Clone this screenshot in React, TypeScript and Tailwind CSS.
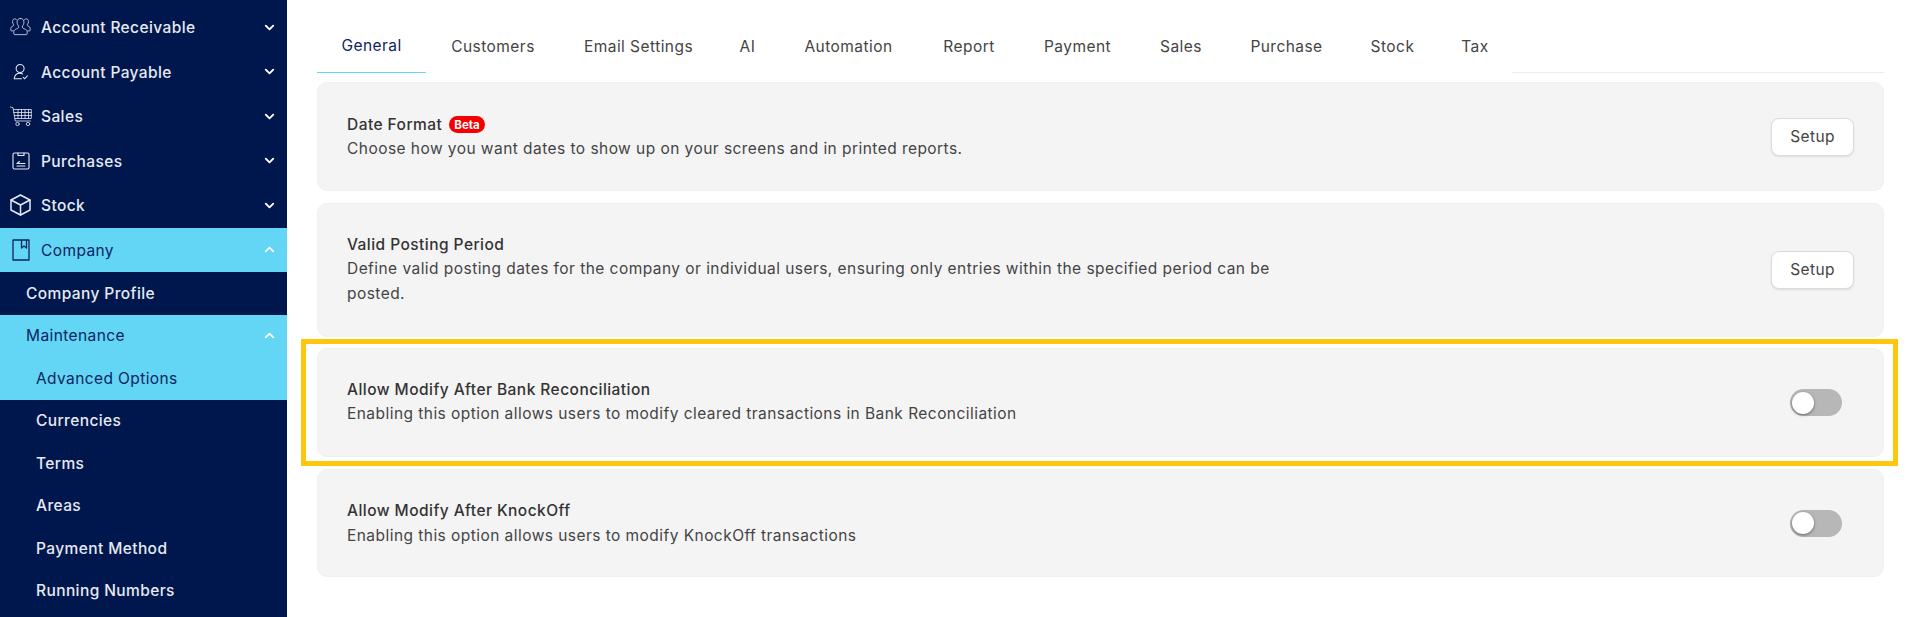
import { ChevronDown, ChevronUp } from "lucide-react";
import type { ReactNode } from "react";

const font = "[font-family:Inter,'Noto_Sans',sans-serif]";

const ReceivableIcon = () => (
  <svg width="21" height="20" viewBox="0 0 22 21" fill="none" stroke="currentColor" strokeWidth="0.8" strokeLinecap="round" strokeLinejoin="round">
    <path d="M11 1.500c-2.300 0-3.600 1.700-3.600 3.900 0 1.700.7 3.100 1.600 4.100v1.300c0 .8-1 1.200-2.400 1.800-1.400.6-2.600 1.200-2.600 2.700v2.200c0 .6.400 1 1 1h12c.6 0 1-.4 1-1v-2.200c0-1.500-1.200-2.100-2.600-2.700-1.400-.6-2.400-1-2.400-1.800V9.500c.9-1 1.600-2.400 1.600-4.100C14.600 3.200 13.300 1.500 11 1.500z" />
    <path d="M7 3C6.500 2.300 5.800 2 5 2 3.400 2 2.600 3.300 2.600 4.800c0 1.200.5 2.200 1.100 2.900v1c0 .6-.7.900-1.500 1.300C1.300 10.500.8 11 .8 12v1.800c0 .5.300.8.800.8h1.600" />
    <path d="M15 3c.5-.7 1.200-1 2-1 1.600 0 2.400 1.300 2.400 2.800 0 1.200-.5 2.200-1.100 2.900v1c0 .6.700.9 1.500 1.300.9.500 1.400 1 1.400 2v1.800c0 .5-.3.800-.8.800h-1.600" />
  </svg>
);

const PayableIcon = () => (
  <svg width="16" height="18" viewBox="0 0 18 20" fill="none" stroke="currentColor" strokeWidth="1.200" strokeLinecap="round" strokeLinejoin="round">
    <circle cx="8" cy="6" r="4.500" />
    <path d="M1.500 17.500c.3-3.600 2.700-6 6.300-6 1.200 0 2.200.2 3 .7" />
    <path d="M1.500 17.500h8" />
    <path d="M11.500 16l1.700 1.600 3-3.200" />
  </svg>
);

const CartIcon = () => (
  <svg width="22" height="21" viewBox="0 0 22 21" fill="none" stroke="currentColor" strokeWidth="0.8" strokeLinecap="round" strokeLinejoin="round">
    <path d="M.5 1l2.500.7 2.300 13.300h15.200" />
    <path d="M3.600 3.500h17.700v9H5" />
    <path d="M3.800 6.500h17.500M4.300 9.500h17M8 3.500v9M11.500 3.500v9M15 3.500v9M18.500 3.500v9" />
    <circle cx="7.500" cy="18" r="1.700" />
    <circle cx="18" cy="18" r="1.700" />
  </svg>
);

const PurchaseIcon = () => (
  <svg width="18" height="18" viewBox="0 0 18 18" fill="none" stroke="currentColor" strokeWidth="1.100" strokeLinecap="round" strokeLinejoin="round">
    <rect x="1" y="1" width="16" height="16" rx="1.500" />
    <path d="M6 1v2.500h6V1" />
    <path d="M5 14h8M5 11.500h8M7.500 9.500L5 11.500" />
  </svg>
);

const BoxIcon = () => (
  <svg width="21" height="22" viewBox="0 0 21 22" fill="none" stroke="currentColor" strokeWidth="1.500" strokeLinecap="round" strokeLinejoin="round">
    <path d="M10.500 1L1 6v10l9.500 5 9.500-5V6z" />
    <path d="M1 6l9.500 5 9.500-5M10.500 11v10" />
  </svg>
);

const BookIcon = () => (
  <svg width="18" height="22" viewBox="0 0 18 22" fill="none" stroke="currentColor" strokeWidth="1.300" strokeLinejoin="round">
    <rect x="1" y="1" width="16" height="20" />
    <path d="M9.500 1v8l2.500-2 2.500 2V1" />
  </svg>
);

const topItems: { label: string; icon: ReactNode }[] = [
  { label: "Account Receivable", icon: <ReceivableIcon /> },
  { label: "Account Payable", icon: <PayableIcon /> },
  { label: "Sales", icon: <CartIcon /> },
  { label: "Purchases", icon: <PurchaseIcon /> },
  { label: "Stock", icon: <BoxIcon /> },
];

const subItems = ["Currencies", "Terms", "Areas", "Payment Method", "Running Numbers"];

const tabs = [
  { label: "General", width: "w-[109px]" },
  { label: "Customers", width: "w-[134px]" },
  { label: "Email Settings", width: "w-[157px]" },
  { label: "AI", width: "w-[61px]" },
  { label: "Automation", width: "w-[141px]" },
  { label: "Report", width: "w-[100px]" },
  { label: "Payment", width: "w-[117px]" },
  { label: "Sales", width: "w-[90px]" },
  { label: "Purchase", width: "w-[121px]" },
  { label: "Stock", width: "w-[91px]" },
  { label: "Tax", width: "w-[74px]" },
];

function Sidebar() {
  return (
    <aside className="w-[287px] shrink-0 bg-[#00174d] pt-[5px] text-[15.500px] tracking-[0.4px] text-[#e6eaf2]">
      {topItems.map((item) => (
        <div key={item.label} className="flex h-[44.500px] items-center">
          <span className="flex w-[41px] shrink-0 justify-center">{item.icon}</span>
          <span className="flex-1 pt-[1px] font-medium">{item.label}</span>
          <ChevronDown size={15} strokeWidth={3} className="mr-[10px] text-white" />
        </div>
      ))}
      <div className="flex h-[44.500px] items-center bg-[#63d5f5] text-[#0b2560]">
        <span className="flex w-[41px] shrink-0 justify-center"><BookIcon /></span>
        <span className="flex-1 pt-[1px]">Company</span>
        <ChevronUp size={15} strokeWidth={3} className="mr-[10px] text-white" />
      </div>
      <div className="flex h-[42.500px] items-center pl-[26px] font-medium">Company Profile</div>
      <div className="bg-[#63d5f5] text-[#0b2560]">
        <div className="flex h-[42.500px] items-center pl-[26px]">
          <span className="flex-1">Maintenance</span>
          <ChevronUp size={15} strokeWidth={3} className="mr-[10px] text-white" />
        </div>
        <div className="flex h-[42.500px] items-center pl-[36px]">Advanced Options</div>
      </div>
      {subItems.map((label) => (
        <div key={label} className="flex h-[42.500px] items-center pl-[36px] font-medium">{label}</div>
      ))}
    </aside>
  );
}

function Card({ className, title, badge, desc, children, highlight }: {
  className: string;
  title: string;
  badge?: boolean;
  desc: string;
  children: ReactNode;
  highlight?: boolean;
}) {
  return (
    <div className={`relative flex items-center justify-between rounded-[10px] border border-[#f0f0f0] bg-[#f4f4f4] pl-[29px] ${className}`}>
      {highlight && (
        <div className="pointer-events-none absolute -top-[10px] -right-[15px] -bottom-[10px] -left-[17px] border-[5px] border-[#fec60d]" />
      )}
      <div className="mb-[1px] max-w-[950px] text-[15.500px] leading-[24.500px] tracking-[0.45px] text-[#444]">
        <div className="flex items-center font-medium text-[#333]">
          {title}
          {badge && (
            <span className="ml-[7px] flex h-[17px] items-center rounded-full bg-[#f50000] px-[5px] text-[11.500px] font-bold tracking-normal text-white">Beta</span>
          )}
        </div>
        <div>{desc}</div>
      </div>
      {children}
    </div>
  );
}

const SetupButton = ({ className }: { className: string }) => (
  <button className={`mr-[29px] h-[38px] w-[83px] rounded-[8px] border border-[#dcdcdc] bg-white text-[15.500px] tracking-[0.4px] text-[#444] shadow-[0_1px_2px_rgba(0,0,0,0.1)] ${className}`}>
    Setup
  </button>
);

const Toggle = ({ className }: { className: string }) => (
  <div className={`mr-[41px] flex h-[27px] w-[52px] items-center rounded-full bg-[#b7b7b7] pl-[2px] ${className}`}>
    <div className="h-[22px] w-[22px] rounded-full bg-white shadow-[0_1px_3px_rgba(0,0,0,0.45)]" />
  </div>
);

export default function App() {
  return (
    <div className={`flex h-[617px] w-[1908px] overflow-hidden bg-white ${font}`}>
      <Sidebar />
      <main className="flex-1 pl-[30px] pr-[24px]">
        <div className="flex h-[73px]">
          {tabs.map((tab, i) => (
            <div
              key={tab.label}
              className={`${tab.width} flex h-[73px] items-center justify-center pt-[20px] text-[15.500px] tracking-[0.45px] ${
                i === 0 ? "border-b-[1.500px] border-[#63d5f5] text-[#0b2560]" : "text-[#444]"
              }`}
            >
              {tab.label}
            </div>
          ))}
          <div className="flex-1 border-b border-[#ececec]" />
        </div>
        <div className="mt-[9px] flex flex-col gap-[12px]">
          <Card
            className="h-[109px] pt-[2px]"
            title="Date Format"
            badge
            desc="Choose how you want dates to show up on your screens and in printed reports."
          >
            <SetupButton className="-mt-[2px]" />
          </Card>
          <Card
            className="-mb-[1px] h-[134px]"
            title="Valid Posting Period"
            desc="Define valid posting dates for the company or individual users, ensuring only entries within the specified period can be posted."
          >
            <SetupButton className="mt-0" />
          </Card>
          <Card
            className="h-[109px]"
            highlight
            title="Allow Modify After Bank Reconciliation"
            desc="Enabling this option allows users to modify cleared transactions in Bank Reconciliation"
          >
            <Toggle className="mt-0" />
          </Card>
          <Card
            className="h-[108px] pt-[2px]"
            title="Allow Modify After KnockOff"
            desc="Enabling this option allows users to modify KnockOff transactions"
          >
            <Toggle className="-mt-[2px]" />
          </Card>
        </div>
      </main>
    </div>
  );
}
